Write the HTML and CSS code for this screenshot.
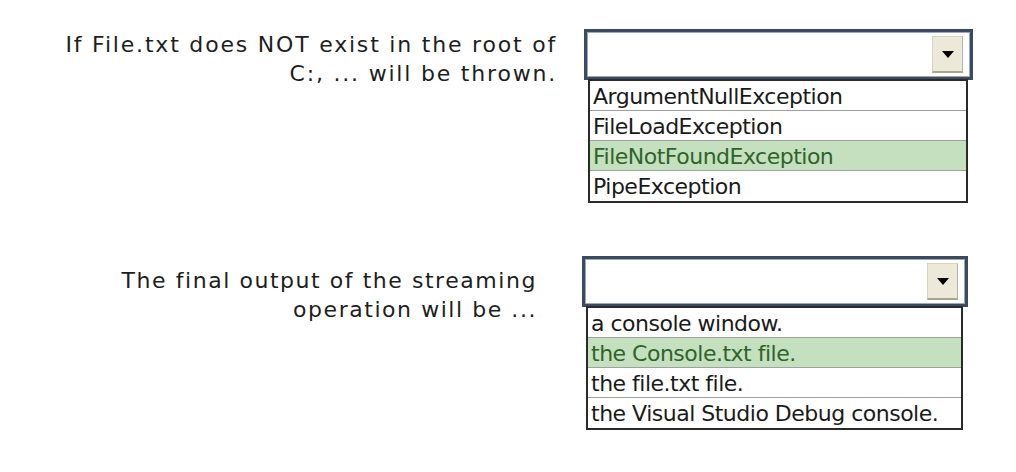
FILE: index.html
```html
<!DOCTYPE html>
<html lang="en">
<head>
    <meta charset="UTF-8">
    <title>Streams quiz</title>
    <link rel="stylesheet" href="styles.css">
</head>
<body>
    <div class="quiz">
        <div class="question q-first">
            <p class="prompt">If File.txt does NOT exist in the root of<br>C:, ... will be thrown.</p>
            <div class="combo">
                <div class="combo-field">
                    <span class="combo-btn"><span class="arrow"></span></span>
                </div>
                <ul class="combo-list">
                    <li class="option">ArgumentNullException</li>
                    <li class="option">FileLoadException</li>
                    <li class="option selected">FileNotFoundException</li>
                    <li class="option">PipeException</li>
                </ul>
            </div>
        </div>

        <div class="question q-second">
            <p class="prompt">The final output of the streaming<br>operation will be ...</p>
            <div class="combo">
                <div class="combo-field">
                    <span class="combo-btn"><span class="arrow"></span></span>
                </div>
                <ul class="combo-list">
                    <li class="option">a console window.</li>
                    <li class="option selected">the Console.txt file.</li>
                    <li class="option">the file.txt file.</li>
                    <li class="option">the Visual Studio Debug console.</li>
                </ul>
            </div>
        </div>
    </div>
</body>
</html>
```

FILE: styles.css
```css
* {
    margin: 0;
    padding: 0;
    box-sizing: border-box;
}

body {
    background: #fff;
    font-family: "DejaVu Sans", Verdana, sans-serif;
    color: #222;
}

.quiz {
    padding-top: 29px;
}

.question {
    display: flex;
    align-items: flex-start;
}

.prompt {
    text-align: right;
    font-size: 22px;
    line-height: 29px;
    letter-spacing: 1.8px;
    color: #1e1e1e;
}

.q-first .prompt {
    width: 557px;
    margin-top: 1px;
    margin-right: 27px;
}

.q-first .combo {
    width: 389px;
}

.q-second {
    margin-top: 53px;
}

.q-second .prompt {
    width: 537px;
    margin-top: 10px;
    margin-right: 45px;
    letter-spacing: 1.55px;
}

.q-second .combo {
    width: 386px;
}

.combo-field {
    height: 51px;
    border: 3px solid #3b4a5e;
    box-shadow: inset 0 0 0 1px #9aa8ba;
    background: #fff;
    display: flex;
    align-items: center;
    justify-content: flex-end;
    padding-right: 7px;
}

.combo-btn {
    width: 31px;
    height: 37px;
    background: #ece9d8;
    border: 1px solid #d8d4c2;
    border-right-color: #b8b4a2;
    border-bottom: 2px solid #a8a492;
    display: flex;
    align-items: center;
    justify-content: center;
}

.arrow {
    width: 0;
    height: 0;
    border-left: 6px solid transparent;
    border-right: 6px solid transparent;
    border-top: 7px solid #000;
}

.combo-list {
    list-style: none;
    margin: -1px 5px 0 4px;
    border: 2px solid #2a2a2a;
    background: #fff;
}

.option {
    height: 30px;
    line-height: 31px;
    padding-left: 3px;
    border-bottom: 1px solid #a0a0a0;
    font-size: 22px;
    letter-spacing: -0.5px;
    color: #1a1a1a;
    white-space: nowrap;
    overflow: hidden;
}

.option:last-child {
    border-bottom: none;
}

.option.selected {
    background: #c4e0bf;
    color: #2e6428;
}
```
